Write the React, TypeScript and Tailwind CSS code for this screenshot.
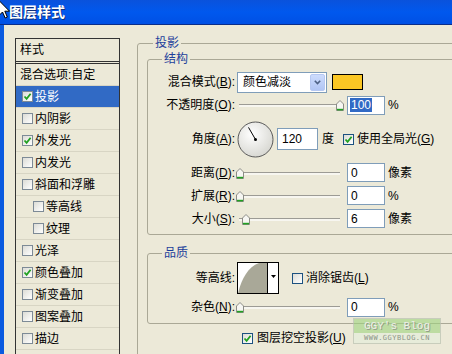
import React from 'react';

const STYLES = [
  { name: '投影', checked: true, selected: true },
  { name: '内阴影' },
  { name: '外发光', checked: true },
  { name: '内发光' },
  { name: '斜面和浮雕' },
  { name: '等高线', sub: true },
  { name: '纹理', sub: true },
  { name: '光泽' },
  { name: '颜色叠加', checked: true },
  { name: '渐变叠加' },
  { name: '图案叠加' },
  { name: '描边' },
];

const Check = ({ checked, dark }: { checked?: boolean; dark?: boolean }) => (
  <span
    className={`relative block w-[11px] h-[11px] shrink-0 border bg-gradient-to-br from-[#dcdcd6] to-white ${
      dark ? 'border-[#1c5180]' : 'border-[#7d8a96]'
    }`}
  >
    {checked && (
      <svg viewBox="0 0 9 9" className="absolute left-0 top-0 w-[9px] h-[9px]">
        <path d="M1.5 4.5 L3.6 6.8 L7.6 1.8" fill="none" stroke="#21a121" strokeWidth="1.8" />
      </svg>
    )}
  </span>
);

const Label = ({ children }: { children: React.ReactNode }) => (
  <div className="w-[88px] shrink-0 text-right pr-[1px]">{children}</div>
);

const Slider = ({ thumb }: { thumb: string }) => (
  <div className="relative w-[111px] h-[20px] shrink-0">
    <div className="absolute left-[3px] top-[9px] w-[101px] h-[3px] border-t border-[#9c9b95] bg-[#f7f6f0]" />
    <svg viewBox="0 0 8 11" className={`absolute top-[5px] w-[8px] h-[11px] ${thumb}`}>
      <path d="M0.5 4 L4 0.5 L7.5 4 L7.5 10.5 L0.5 10.5 Z" fill="#f6f6f2" stroke="#8c8c86" />
      <path d="M1 9.6 L7 9.6" stroke="#21a121" strokeWidth="1.6" />
    </svg>
  </div>
);

const Field = ({ children, w = 'w-[38px]', h = 'h-[19px]' }: { children: React.ReactNode; w?: string; h?: string }) => (
  <div className={`${w} ${h} shrink-0 border border-[#7f9db9] bg-white pl-[2px] flex items-center`}>{children}</div>
);

const Dial = () => (
  <svg viewBox="0 0 37 37" className="w-[37px] h-[37px] shrink-0 ml-[1px]">
    <defs>
      <radialGradient id="dialg" cx="40%" cy="35%" r="70%">
        <stop offset="0%" stopColor="#ffffff" />
        <stop offset="100%" stopColor="#d6d6d0" />
      </radialGradient>
    </defs>
    <circle cx="18.5" cy="18.5" r="17.5" fill="url(#dialg)" stroke="#5a5a5a" />
    <path d="M18.5 18.5 L11.5 6.4" stroke="#000" strokeWidth="1" />
    <circle cx="18.5" cy="18.5" r="1.5" fill="#000" />
  </svg>
);

const Contour = () => (
  <svg viewBox="0 0 42 32" className="w-[42px] h-[32px] shrink-0 ml-[1px]">
    <rect x="0.5" y="0.5" width="41" height="31" fill="#fff" stroke="#000" />
    <path d="M1 31 C 5 16, 11 5, 22 1 L 30 1 L 30 31 Z" fill="#a9a898" />
    <path d="M30.5 1 L30.5 31" stroke="#000" />
    <path d="M34 13 L39 13 L36.5 16 Z" fill="#000" />
  </svg>
);

export default function App() {
  return (
    <div className="relative w-[452px] h-[354px] overflow-hidden bg-[#ece9d8] text-[12px] leading-[16px] text-black font-['Liberation_Sans','Noto_Sans_CJK_SC',sans-serif]">
      <div className="relative h-[25px] bg-gradient-to-b from-[#0a52dc] via-[#0058ee] to-[#0050e4] border-b border-[#0a2d8a] flex items-center pl-[9px]">
        <span className="text-white font-bold text-[14px] leading-[18px] [text-shadow:1px_1px_0_#10307a]">图层样式</span>
        <svg viewBox="0 0 12 19" className="absolute left-[-2px] top-0 w-[12px] h-[19px]">
          <path d="M1 0.5 L1 15.5 L4.5 12 L7.2 18 L9.3 17 L6.8 11.2 L11.5 11.2 Z" fill="#fff" stroke="#000" strokeWidth="1" />
        </svg>
      </div>

      <div className="flex h-[329px] border-l-4 border-[#0a5ae0]">
        <div className="pl-[11px] pt-[13px] shrink-0">
          <div className="w-[105px] h-[330px] border border-[#333]">
            <div className="h-[25px] border-b-[3px] border-double border-[#333] pl-[4px] flex items-center">样式</div>
            <div className="h-[22px] border-b border-[#d8d5c4] pl-[4px] flex items-center">混合选项:自定</div>
            {STYLES.map((s) => (
              <div
                key={s.name}
                className={`h-[22px] border-b border-[#d8d5c4] flex items-center gap-[2px] ${
                  s.sub ? 'pl-[17px]' : 'pl-[6px]'
                } ${s.selected ? 'bg-[#316ac5] text-white' : ''}`}
              >
                <Check checked={s.checked} />
                <span>{s.name}</span>
              </div>
            ))}
          </div>
        </div>

        <fieldset className="ml-[17px] mt-[10px] w-[330px] h-[340px] shrink-0 border border-[#aaa896] rounded-[3px]">
          <legend className="ml-[15px] px-[2px] text-[#1d3e9b]">投影</legend>
          <div className="pl-[9px]">
            <fieldset className="border border-[#aaa896] rounded-[3px] pt-[4px] pb-[4px]">
              <legend className="ml-[14px] px-[2px] text-[#1d3e9b]">结构</legend>
              <div className="flex items-center h-[22px]">
                <Label>
                  混合模式(<u>B</u>):
                </Label>
                <div className="ml-[1px] w-[90px] h-[21px] shrink-0 border border-[#7f9db9] bg-white flex items-center">
                  <span className="flex-1 pl-[5px]">颜色减淡</span>
                  <span className="w-[15px] h-[17px] mr-[1px] rounded-[2px] bg-gradient-to-b from-[#cddcfc] to-[#b1c5f5] border border-[#b6c8f2] flex items-center justify-center">
                    <svg viewBox="0 0 7 5" className="w-[7px] h-[5px]">
                      <path d="M0.8 0.8 L3.5 3.6 L6.2 0.8" fill="none" stroke="#4d6185" strokeWidth="1.6" />
                    </svg>
                  </span>
                </div>
                <div className="ml-[5px] w-[31px] h-[16px] bg-[#fbc724] border border-black" />
              </div>

              <div className="flex items-center h-[24px]">
                <Label>
                  不透明度(<u>O</u>):
                </Label>
                <Slider thumb="left-[100px]" />
                <Field>
                  <span className="bg-[#316ac5] text-white px-[1px] leading-[14px]">100</span>
                </Field>
                <span className="ml-[3px]">%</span>
              </div>

              <div className="flex items-center h-[44px]">
                <Label>
                  角度(<u>A</u>):
                </Label>
                <Dial />
                <div className="ml-[3px]">
                  <Field w="w-[41px]" h="h-[22px]">
                    <span className="pl-[2px]">120</span>
                  </Field>
                </div>
                <span className="ml-[4px]">度</span>
                <span className="ml-[9px]">
                  <Check checked dark />
                </span>
                <span className="ml-[3px]">
                  使用全局光(<u>G</u>)
                </span>
              </div>

              <div className="flex items-center h-[23px]">
                <Label>
                  距离(<u>D</u>):
                </Label>
                <Slider thumb="left-0" />
                <Field>
                  <span className="pl-[1px]">0</span>
                </Field>
                <span className="ml-[3px]">像素</span>
              </div>

              <div className="flex items-center h-[23px]">
                <Label>
                  扩展(<u>R</u>):
                </Label>
                <Slider thumb="left-0" />
                <Field>
                  <span className="pl-[1px]">0</span>
                </Field>
                <span className="ml-[3px]">%</span>
              </div>

              <div className="flex items-center h-[23px]">
                <Label>
                  大小(<u>S</u>):
                </Label>
                <Slider thumb="left-[6px]" />
                <Field>
                  <span className="pl-[1px]">6</span>
                </Field>
                <span className="ml-[3px]">像素</span>
              </div>
            </fieldset>

            <fieldset className="mt-[10px] border border-[#aaa896] rounded-[3px] pb-[4px]">
              <legend className="ml-[14px] px-[2px] text-[#1d3e9b]">品质</legend>
              <div className="flex items-center h-[34px]">
                <Label>等高线:</Label>
                <Contour />
                <span className="ml-[13px]">
                  <Check dark />
                </span>
                <span className="ml-[3px]">
                  消除锯齿(<u>L</u>)
                </span>
              </div>
              <div className="flex items-center h-[24px]">
                <Label>
                  杂色(<u>N</u>):
                </Label>
                <Slider thumb="left-0" />
                <Field>
                  <span className="pl-[1px]">0</span>
                </Field>
                <span className="ml-[3px]">%</span>
              </div>
            </fieldset>

            <div className="mt-[6px] h-[16px] flex items-center pl-[95px]">
              <Check checked dark />
              <span className="ml-[4px]">
                图层挖空投影(<u>U</u>)
              </span>
            </div>
          </div>
        </fieldset>
      </div>

      <div className="absolute left-[353px] top-[318px] w-[88px] h-[26px] border border-[#b9c0b0]/70 flex flex-col">
        <div className="h-[14px] bg-[#9fd37f]/60 flex items-center justify-center text-[11px] leading-[12px] text-[#eef0ea] font-['Liberation_Mono',monospace] [text-shadow:1px_1px_0_#8f9a88]">
          GGY's Blog
        </div>
        <div className="flex-1 bg-[#e4eedc]/60 flex items-center justify-center text-[7px] leading-[8px] tracking-[0.5px] text-[#8c9486] font-['DejaVu_Sans_Mono',monospace]">
          WWW.GGYBLOG.CN
        </div>
      </div>
    </div>
  );
}
